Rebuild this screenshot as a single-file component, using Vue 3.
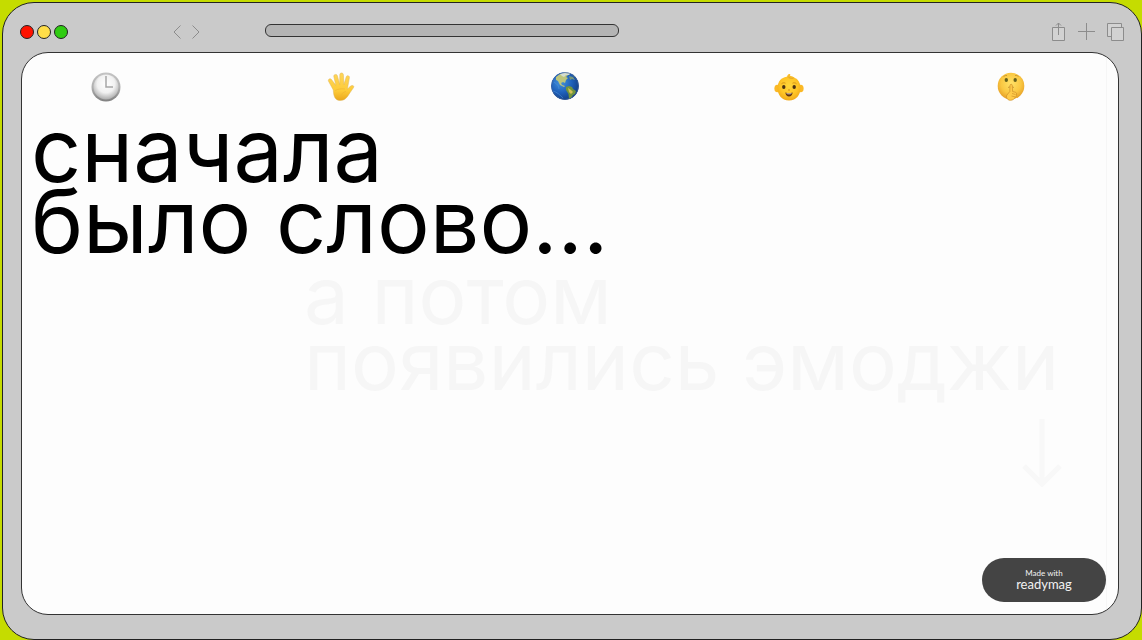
<script setup>
const lights = [
  { name: 'Close', tone: 'red' },
  { name: 'Minimise', tone: 'yellow' },
  { name: 'Zoom', tone: 'green' },
]
</script>

<template>
  <div class="desktop">
    <div class="window">
      <header class="toolbar">
        <div class="lights">
          <button v-for="l in lights" :key="l.tone" type="button" class="light" :class="l.tone" :aria-label="l.name"></button>
        </div>
        <nav class="history" aria-label="History">
          <button type="button" aria-label="Back">
            <svg width="8" height="14" viewBox="0 0 8 14"><path d="M7.5 .5 1 7l6.5 6.5" /></svg>
          </button>
          <button type="button" aria-label="Forward">
            <svg width="8" height="14" viewBox="0 0 8 14"><path d="M.5 .5 7 7 .5 13.5" /></svg>
          </button>
        </nav>
        <input class="address" type="text" aria-label="Address" />
        <div class="actions">
          <button type="button" aria-label="Share">
            <svg width="14" height="20" viewBox="0 0 14 20"><path class="pale" d="M.5 5.500h12v13H.5z" /><path d="M6.500 13V1M4 3.500 6.500 1 9 3.500" /></svg>
          </button>
          <button type="button" aria-label="New tab">
            <svg width="17" height="17" viewBox="0 0 17 17"><path d="M8.500 0v17M0 8.500h17" /></svg>
          </button>
          <button type="button" aria-label="Show tabs">
            <svg width="18" height="18" viewBox="0 0 18 18"><path class="pale" d="M.5 .5h14v13H.5z" /><path class="pale" d="M4.500 4.500h12v13h-12z" /></svg>
          </button>
        </div>
      </header>

      <main class="page">
        <nav class="emoji-row" aria-label="Разделы">
          <a href="#time" aria-label="Время">
            <svg width="30" height="30" viewBox="0 0 30 30">
              <defs>
                <linearGradient id="rim" x1="0" y1="0" x2="0" y2="1"><stop offset="0" stop-color="#c4c4c4" /><stop offset=".5" stop-color="#b0b0b0" /><stop offset="1" stop-color="#808080" /></linearGradient>
                <radialGradient id="dial" cx=".5" cy=".38" r=".64"><stop offset="0" stop-color="#fff" /><stop offset=".55" stop-color="#f1f1f1" /><stop offset="1" stop-color="#a8a8a8" /></radialGradient>
              </defs>
              <circle cx="15" cy="15" r="14.500" fill="url(#rim)" />
              <circle cx="15" cy="15" r="12.500" fill="url(#dial)" />
              <path d="M15 4v11h7" fill="none" stroke="#a6a6a6" stroke-width="1.500" />
            </svg>
          </a>
          <a href="#gesture" aria-label="Жесты">
            <svg width="28" height="30" viewBox="0 0 28 30">
              <defs><linearGradient id="palm" x1="0" y1="0" x2="0" y2="1"><stop offset="0" stop-color="#ffd659" /><stop offset=".65" stop-color="#fdcb38" /><stop offset="1" stop-color="#eba71c" /></linearGradient></defs>
              <path fill="url(#palm)" stroke="#dfb75d" stroke-width=".5" d="M6.300 18 1.500 9.200C.6 7.300 3.300 5.800 4.500 7.500l4.300 5.800L6.800 4.500c-.4-2.300 3-2.900 3.600-.7l2.300 8.700.1-9.800c0-2.300 3.500-2.300 3.600 0l.5 9.900 2.300-7.700c.6-2.100 3.700-1.300 3.200.9l-2 11.200c1.800-1.400 2.900-3.100 4.500-3.500 1.600-.3 2.500 1 1.500 2.300-2.200 2.700-4 6.300-6.200 9.100-2 2.700-4.600 3.700-7.600 3.500-4.300-.2-6-3.600-6.300-10.400z" />
              <path d="M8 18.500c3-1.500 6-2 10-1.500M13.500 25c.8-3 2.600-5 5.500-5.500" fill="none" stroke="#efb634" stroke-width=".7" />
            </svg>
          </a>
          <a href="#world" aria-label="Мир">
            <svg width="29" height="30" viewBox="0 0 29 30">
              <defs>
                <radialGradient id="sea" cx=".35" cy=".35" r=".7"><stop offset="0" stop-color="#4794dc" /><stop offset=".55" stop-color="#1f61bb" /><stop offset="1" stop-color="#123d83" /></radialGradient>
                <clipPath id="ball"><circle cx="14" cy="14" r="14" /></clipPath>
              </defs>
              <g clip-path="url(#ball)">
                <circle cx="14" cy="14" r="14" fill="url(#sea)" />
                <path d="m5 5 4-3 5-.5 3 1.500-2 2 2 1-2 2-1 3-2-1-2 1 1 2 3 1-1 1-4-2-2-4-2-1z" fill="#bdc57c" />
                <path d="m9 2 5-2 6 1-2 2-3 0-2 2-2-1z" fill="#d5ddd0" />
                <path d="m15 15 3-1 3 1 1 2 3 2-1 3-2 1-2 3-2 1-.5-5-2.500-4z" fill="#72953c" />
                <path d="m17 16 3 2 2 2-2 2-2-2z" fill="#d3bf58" />
                <path d="m18 4 4 1 2 3-3-1-2 1zM22 2l3 3-2 0z" fill="#76977b" />
                <path d="M3 10c3 2 5 4 5 7M2 19c4 1 7 4 10 7" fill="none" stroke="#559be0" stroke-width=".7" opacity=".7" />
                <circle cx="14" cy="14" r="13.500" fill="none" stroke="#44639a" stroke-width=".7" />
              </g>
            </svg>
          </a>
          <a href="#people" aria-label="Люди">
            <svg width="30" height="30" viewBox="0 0 30 30">
              <defs><radialGradient id="skin" cx=".5" cy=".4" r=".62"><stop offset="0" stop-color="#ffd63b" /><stop offset=".6" stop-color="#ffc526" /><stop offset="1" stop-color="#f0a718" /></radialGradient></defs>
              <ellipse cx="3.200" cy="16.500" rx="2.800" ry="3.800" fill="#fbb927" /><ellipse cx="26.800" cy="16.500" rx="2.800" ry="3.800" fill="#fbb927" />
              <path d="M15 4.500c7.500 0 11.500 5 11.500 11.500S22.500 28.500 15 28.500 3.500 22.500 3.500 16 7.500 4.500 15 4.500z" fill="url(#skin)" />
              <path d="M13.500 6c-1-2.500.5-4.500 3-4-1 1-.5 2 1 2.200 1.500.3 2.500.8 3 1.800-2 1-5 1-7 0z" fill="#f9bd2c" />
              <path d="M14 4.500c1 1.700 3 2.200 5.500 1.700" fill="none" stroke="#dda029" stroke-width=".8" />
              <ellipse cx="9.800" cy="15" rx="1.700" ry="2.100" fill="#4a3212" /><ellipse cx="20.200" cy="15" rx="1.700" ry="2.100" fill="#4a3212" />
              <path d="M7.500 11.800c1-1 2.500-1.300 4-.6M18.500 11.200c1.500-.7 3-.4 4 .6M14 18h2" fill="none" stroke="#c78312" stroke-width=".8" />
              <path d="M11.300 20.500q3.700 1.300 7.400 0-.7 4-3.700 4t-3.700-4z" fill="#5e3010" /><path d="M12.300 21.200q2.700.7 5.400 0l-.5.900q-2.200.5-4.400 0z" fill="#fff" />
            </svg>
          </a>
          <a href="#silence" aria-label="Тишина">
            <svg width="28" height="30" viewBox="0 0 28 30">
              <defs><radialGradient id="face" cx=".5" cy=".4" r=".62"><stop offset="0" stop-color="#ffe268" /><stop offset=".6" stop-color="#fac842" /><stop offset="1" stop-color="#e49c25" /></radialGradient></defs>
              <circle cx="14" cy="14" r="13.300" fill="url(#face)" />
              <ellipse cx="9.300" cy="8" rx="1.700" ry="2" fill="#65601b" /><ellipse cx="18.200" cy="8" rx="1.700" ry="2" fill="#65601b" />
              <path d="M6.500 4.500q2-1.500 3.500-1M18 3.500q2-.5 3.500 1M11 15.500q3-2 6 0" fill="none" stroke="#c18e30" stroke-width=".8" />
              <path d="M13 13.500c0-1.700 2.300-1.700 2.300 0l.3 6 2.700.7c1.700.6 1.500 2.800.6 4.200-1.200 2.300-3.100 4-5.600 3.900-3-.2-4.500-2.800-3.500-5.100l3-3.700z" fill="#ffcb49" stroke="#cf912a" stroke-width=".7" />
              <path d="m15 21.500 3.500 1m-4 1.500 3.500.8" stroke="#cf912a" stroke-width=".7" />
            </svg>
          </a>
        </nav>

        <h1>сначала<br />было слово...</h1>
        <div class="next">
          <p>а потом<br />появились эмоджи</p>
          <svg class="down" width="40" height="68" viewBox="0 0 40 68"><path d="M20 0v65M2 47l18 18 18-18" /></svg>
        </div>

        <a class="badge" href="#readymag"><small>Made with</small><span>readymag</span></a>
      </main>
    </div>
  </div>
</template>

<style>
body { background: #c5dc00; }
</style>

<style scoped>
* { box-sizing: border-box; }
.desktop {
  min-height: 100vh;
  padding: 2px 0 0 2px;
  display: flex;
  background: #c5dc00;
  font-family: Inter, "Liberation Sans", sans-serif;
}
.window {
  flex: 1;
  min-width: 0;
  display: flex;
  flex-direction: column;
  padding: 0 22px 24px 18px;
  background: #cacaca;
  border: 1px solid #222;
  border-radius: 32px;
}
button { padding: 0; border: 0; background: none; display: flex; cursor: pointer; }
.toolbar { height: 49px; padding-top: 8px; display: flex; align-items: center; margin: 0 -6px 0 -1px; }
.lights { display: flex; gap: 3px; }
.light { width: 14px; height: 14px; border: 1px solid #222; border-radius: 50%; }
.red { background: #ff1200; }
.yellow { background: #ffde49; }
.green { background: #30cc12; }
.history { display: flex; gap: 11px; margin-left: 105px; }
.toolbar svg { fill: none; stroke: #8c8c8c; stroke-width: 1; }
.toolbar .pale { fill: #d2d2d2; }
.address {
  width: 32%;
  height: 13px;
  margin: 0 0 2px 65px;
  padding: 0 6px;
  border: 1px solid #333;
  border-radius: 6px;
  background: #b4b4b4;
  font: 9px Inter, sans-serif;
}
.actions { margin-left: auto; display: flex; align-items: center; gap: 12px; }
.page {
  position: relative;
  flex: 1;
  overflow: hidden;
  border: 1px solid #333;
  border-radius: 27px;
  background: linear-gradient(#f6f6f6, #f6f6f6) right 11px top / 1px 100% no-repeat #fdfdfd;
}
.emoji-row {
  display: grid;
  grid-template-columns: 236fr 224fr 223fr 223fr auto;
  padding: 19px 93px 0 69px;
}
.emoji-row a, .emoji-row svg { display: block; justify-self: start; }
h1, p { margin: 0; font-weight: 400; white-space: nowrap; }
h1 { margin: 13px 0 0 9px; font-size: 88px; line-height: 71px; color: #000; }
.next { width: 758px; max-width: 100%; margin: 5px 56px 0 auto; color: #f6f6f6; }
p { font-size: 80px; line-height: 66px; }
.down { display: block; margin: 25px 0 0 auto; fill: none; stroke: #f8f8f8; stroke-width: 5; }
.badge {
  position: absolute;
  right: 12px;
  bottom: 12px;
  width: 124px;
  height: 44px;
  border-radius: 22px;
  background: #444;
  color: #f2f2f2;
  display: flex;
  flex-direction: column;
  align-items: center;
  justify-content: center;
  padding-bottom: 2px;
  text-decoration: none;
  font-family: Lato, sans-serif;
}
.badge small { font-size: 8px; line-height: 10px; }
.badge span { font-size: 13px; line-height: 12px; }
</style>
